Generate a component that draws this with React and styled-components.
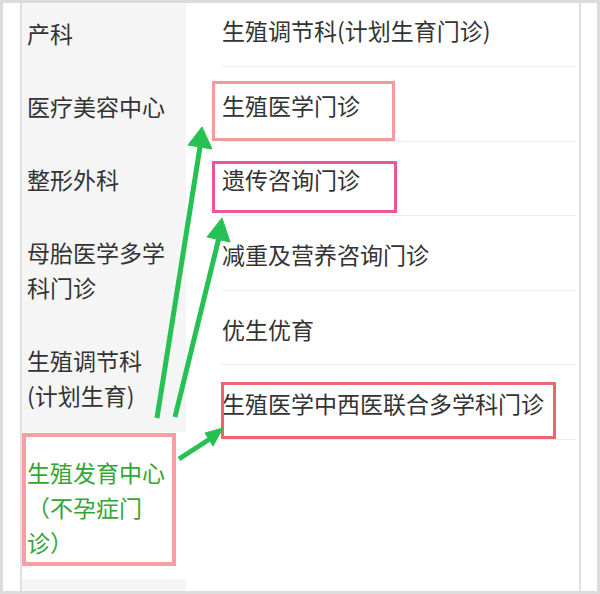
import React from 'react';
import styled, { createGlobalStyle } from 'styled-components';

const GlobalStyle = createGlobalStyle`
  body {
    margin: 0;
    background: #fff;
    font-family: "Noto Sans CJK SC", "Noto Sans", sans-serif;
  }
`;

const Frame = styled.div`
  position: relative;
  width: 600px;
  height: 594px;
  box-sizing: border-box;
  border: 3px solid #dcdcdc;
  background: #fff;
  display: flex;
  overflow: hidden;
`;

const Gutter = styled.div`
  width: 17px;
  flex-shrink: 0;
`;

const Panel = styled.div`
  flex: 1;
  display: flex;
  margin-right: 16px;
  border-left: 2px solid #e0e0e0;
  border-right: 2px solid #e0e0e0;
`;

const Sidebar = styled.div`
  width: 164px;
  flex-shrink: 0;
  background: #f5f5f5;
  display: flex;
  flex-direction: column;
  margin-top: -6px;
  height: calc(100% + 6px);
`;

const NavItem = styled.div`
  position: relative;
  padding: ${p => (p.$active ? '23px' : '19px')} 17px 19px 5px;
  line-height: 35px;
  font-size: 23px;
  color: ${p => (p.$active ? '#33a532' : '#333')};
  background: ${p => (p.$active ? '#fff' : 'transparent')};
`;

const Content = styled.div`
  flex: 1;
  display: flex;
  flex-direction: column;
  margin-top: -10.6px;
`;

const Row = styled.div`
  position: relative;
  height: 74.6px;
  box-sizing: border-box;
  margin: 0 3px 0 36px;
  padding-top: 2px;
  display: flex;
  align-items: center;
  border-bottom: 1px solid #ececec;
  font-size: 23px;
  color: #333;
  white-space: nowrap;
`;

const Mark = styled.div`
  position: absolute;
  left: ${p => p.$x}px;
  top: ${p => p.$y}px;
  width: ${p => p.$w}px;
  height: ${p => p.$h}px;
  box-sizing: border-box;
  border: ${p => p.$b || 3}px solid ${p => p.$color};
  pointer-events: none;
`;

const Arrows = styled.svg`
  position: absolute;
  left: -3px;
  top: -3px;
  width: 600px;
  height: 594px;
  pointer-events: none;
`;

const navs = ['产科', '医疗美容中心', '整形外科', '母胎医学多学科门诊', '生殖调节科(计划生育)'];

const rows = [
  { text: '生殖调节科(计划生育门诊)' },
  { text: '生殖医学门诊', mark: { x: -10, y: 14, w: 183, h: 60, color: '#f59b9b' } },
  { text: '遗传咨询门诊', mark: { x: -10, y: 19, w: 185, h: 52, color: '#ef559b' } },
  { text: '减重及营养咨询门诊' },
  { text: '优生优育' },
  { text: '生殖医学中西医联合多学科门诊', mark: { x: -1, y: 17, w: 335, h: 57, color: '#ec666d' } },
];

const arrows = [
  { from: [157, 418], tip: [202, 127], a: [188, 145], b: [212, 149] },
  { from: [175, 417], tip: [222, 218], a: [207, 237], b: [230, 242] },
  { from: [179, 459], tip: [223, 428], a: [205, 433], b: [213, 446] },
];

export default function App() {
  return (
    <>
      <GlobalStyle />
      <Frame>
        <Gutter />
        <Panel>
          <Sidebar>
            {navs.map((n, i) => (
              <NavItem key={`nav-${i}`}>{n}</NavItem>
            ))}
            <NavItem $active>
              生殖发育中心（不孕症门诊）
              <Mark $x={0} $y={1} $w={154} $h={133} $b={4} $color="#f5a0a0" />
            </NavItem>
          </Sidebar>
          <Content>
            {rows.map((r, i) => (
              <Row key={`row-${i}`}>
                {r.text}
                {r.mark && <Mark $x={r.mark.x} $y={r.mark.y} $w={r.mark.w} $h={r.mark.h} $color={r.mark.color} />}
              </Row>
            ))}
          </Content>
        </Panel>
        <Arrows viewBox="0 0 600 594">
          {arrows.map((ar, i) => {
            const mx = (ar.a[0] + ar.b[0]) / 2;
            const my = (ar.a[1] + ar.b[1]) / 2;
            return (
              <g key={`ar-${i}`} fill="#27c052" stroke="#27c052">
                <line x1={ar.from[0]} y1={ar.from[1]} x2={mx} y2={my} strokeWidth="5" />
                <polygon points={`${ar.tip.join(',')} ${ar.a.join(',')} ${ar.b.join(',')}`} strokeWidth="1" strokeLinejoin="round" />
              </g>
            );
          })}
        </Arrows>
      </Frame>
    </>
  );
}
